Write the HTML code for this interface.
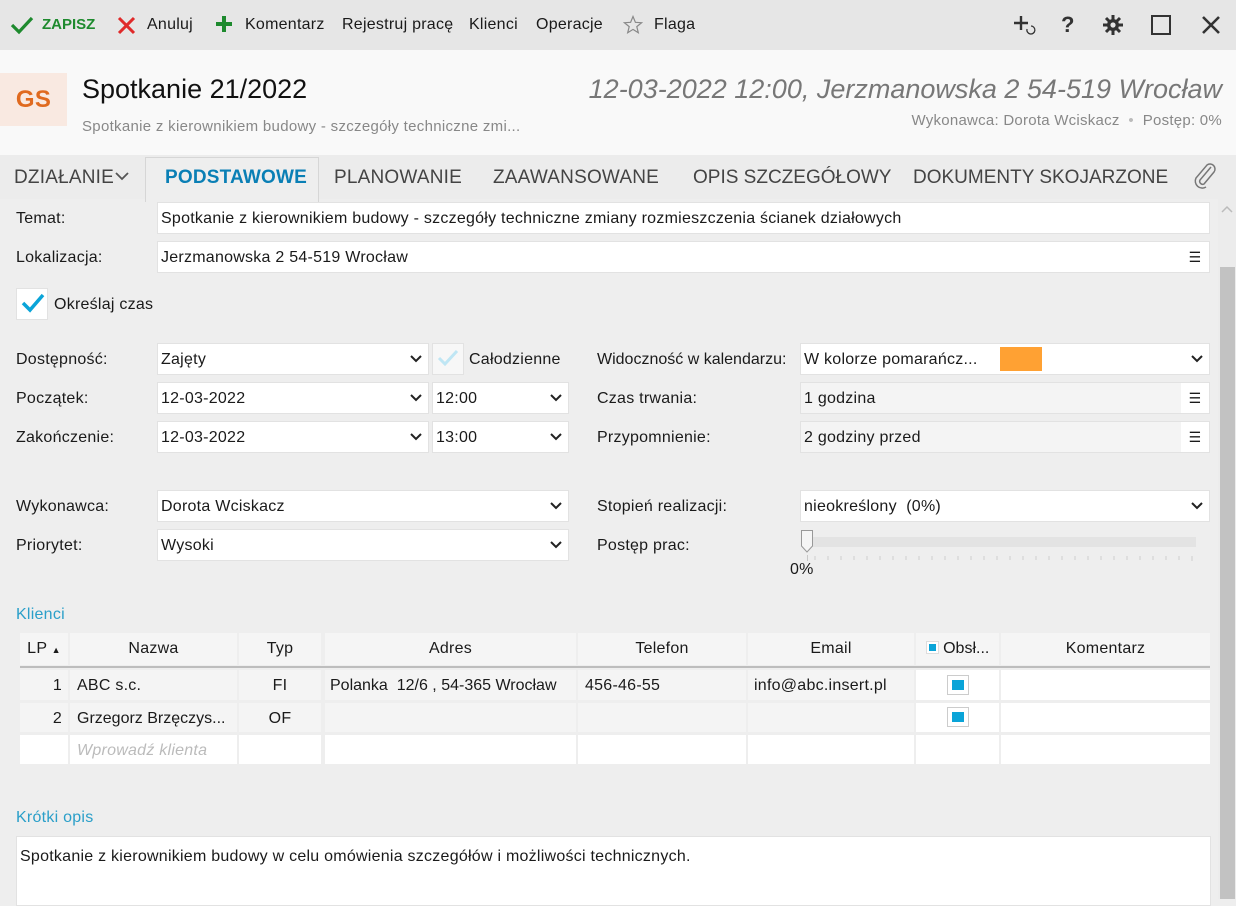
<!DOCTYPE html>
<html><head><meta charset="utf-8">
<style>
*{box-sizing:border-box;margin:0;padding:0}
body{width:1236px;height:899px;overflow:hidden;background:#eeeeee;font-family:"Liberation Sans",sans-serif;font-size:16px;letter-spacing:0.25px;color:#1a1a1a;position:relative}
.a{position:absolute;white-space:nowrap}
.f{position:absolute;background:#fff;border:1px solid #e2e2e2;height:32px;line-height:32px;padding-left:3px;white-space:nowrap;overflow:hidden}
.g{background:#f4f4f4}
.chev{position:absolute;right:6px;top:11px}
.ham{position:absolute;right:0;top:0;width:28px;height:30px;background:#fff;text-align:center;line-height:30px;font-size:14px}
.lbl{position:absolute;white-space:nowrap;line-height:20px}
.th,.td{position:absolute;height:32px;line-height:32px;text-align:center;white-space:nowrap;overflow:hidden}
.th{background:#f5f5f5;top:633px}
.tb{display:inline-block;vertical-align:middle}
.tab{position:absolute;top:167px;font-size:19px;color:#444;letter-spacing:0.2px}
</style></head><body>
<!-- toolbar -->
<div class="a" style="left:0;top:0;width:1236px;height:50px;background:#e6e6e6"></div>
<svg class="a" style="left:10px;top:15px" width="24" height="20" viewBox="0 0 24 20"><path d="M2 10 L9 17 L22 3" stroke="#1e8a2e" stroke-width="3.2" fill="none"/></svg>
<div class="a" style="left:42px;top:16px;color:#1e8a2e;font-weight:bold;font-size:15px;letter-spacing:0">ZAPISZ</div>
<svg class="a" style="left:117px;top:16px" width="19" height="19"><path d="M2 2L17 17M17 2L2 17" stroke="#e02a2a" stroke-width="3"/></svg>
<div class="a" style="left:147px;top:16px">Anuluj</div>
<svg class="a" style="left:215px;top:15px" width="18" height="18"><path d="M9 1V17M1 9H17" stroke="#1e8a2e" stroke-width="4"/></svg>
<div class="a" style="left:245px;top:16px">Komentarz</div>
<div class="a" style="left:342px;top:16px">Rejestruj pracę</div>
<div class="a" style="left:469px;top:16px">Klienci</div>
<div class="a" style="left:536px;top:16px">Operacje</div>
<svg class="a" style="left:623px;top:15px" width="20" height="20" viewBox="0 0 20 20"><path d="M10 1.5L12.4 7.3 18.6 7.7 13.8 11.6 15.3 17.7 10 14.4 4.7 17.7 6.2 11.6 1.4 7.7 7.6 7.3Z" fill="none" stroke="#888" stroke-width="1.2"/></svg>
<div class="a" style="left:654px;top:16px">Flaga</div>
<svg class="a" style="left:1013px;top:14px" width="26" height="24"><path d="M8 2V16M1 9H15" stroke="#333" stroke-width="2.4"/><path d="M14 15a4 4 0 1 0 4-3" stroke="#333" stroke-width="1.3" fill="none"/></svg>
<div class="a" style="left:1061px;top:12px;font-size:22px;font-weight:bold;color:#333">?</div>
<svg class="a" style="left:1102px;top:14px" width="22" height="22" viewBox="0 0 22 22"><g stroke="#333" stroke-width="3"><path d="M11 1V21M1 11H21M4 4L18 18M18 4L4 18"/></g><circle cx="11" cy="11" r="6" fill="#333"/><circle cx="11" cy="11" r="2.6" fill="#e6e6e6"/></svg>
<div class="a" style="left:1151px;top:15px;width:20px;height:20px;border:2.5px solid #333"></div>
<svg class="a" style="left:1201px;top:15px" width="20" height="20"><path d="M2 2L18 18M18 2L2 18" stroke="#333" stroke-width="2.6"/></svg>
<!-- header -->
<div class="a" style="left:0;top:50px;width:1236px;height:105px;background:#f9f9f9"></div>
<div class="a" style="left:0;top:73px;width:67px;height:53px;background:#f9e9e1;color:#e06a1f;font-size:24px;line-height:53px;text-align:center;font-weight:bold">GS</div>
<div class="a" style="left:82px;top:74px;font-size:27px;color:#111;letter-spacing:0">Spotkanie 21/2022</div>
<div class="a" style="left:82px;top:118px;font-size:15px;color:#888;letter-spacing:0.3px">Spotkanie z kierownikiem budowy - szczegóły techniczne zmi...</div>
<div class="a" style="right:14px;top:74px;font-size:27px;color:#777;font-style:italic;letter-spacing:0">12-03-2022 12:00, Jerzmanowska 2 54-519 Wrocław</div>
<div class="a" style="right:14px;top:112px;font-size:15px;color:#888">Wykonawca: Dorota Wciskacz &nbsp;<span style="color:#bbb">•</span>&nbsp; Postęp: 0%</div>
<!-- tabs -->
<div class="a" style="left:0;top:155px;width:1236px;height:44px;background:#ececec"></div>
<div class="a" style="left:145px;top:157px;width:174px;height:45px;background:#eeeeee;border:1px solid #d6d6d6;border-bottom:none"></div>
<div class="tab" style="left:14px">DZIAŁANIE</div>
<svg class="a" style="left:115px;top:171px" width="14" height="10"><path d="M1 2L7 8 13 2" stroke="#555" stroke-width="1.8" fill="none"/></svg>
<div class="tab" style="left:165px;color:#0a7fb5;font-weight:bold">PODSTAWOWE</div>
<div class="tab" style="left:334px">PLANOWANIE</div>
<div class="tab" style="left:493px">ZAAWANSOWANE</div>
<div class="tab" style="left:693px;letter-spacing:0">OPIS SZCZEGÓŁOWY</div>
<div class="tab" style="left:913px;letter-spacing:0">DOKUMENTY SKOJARZONE</div>
<svg class="a" style="left:1193px;top:162px" width="26" height="28" viewBox="0 0 26 28"><path d="M20 6L9 19a3 3 0 0 0 4 4L23 11a5 5 0 0 0-7-7L5 17a7 7 0 0 0 10 9" stroke="#777" stroke-width="1.5" fill="none" transform="translate(-2,-1)"/></svg>
<!-- scrollbar -->
<div class="a" style="left:1218px;top:199px;width:18px;height:700px;background:#ececec"></div>
<svg class="a" style="left:1221px;top:205px" width="12" height="10"><path d="M1 7L6 2 11 7" stroke="#bbb" stroke-width="1.5" fill="none"/></svg>
<div class="a" style="left:1220px;top:267px;width:15px;height:632px;background:#c2c2c2"></div>
<!-- form -->
<div class="lbl" style="left:16px;top:209px">Temat:</div>
<div class="f" style="left:157px;top:202px;width:1053px">Spotkanie z kierownikiem budowy - szczegóły techniczne zmiany rozmieszczenia ścianek działowych</div>
<div class="lbl" style="left:16px;top:248px">Lokalizacja:</div>
<div class="f" style="left:157px;top:241px;width:1053px">Jerzmanowska 2 54-519 Wrocław<div class="ham">☰</div></div>
<div class="a" style="left:16px;top:288px;width:32px;height:32px;background:#fff;border:1px solid #e2e2e2"></div>
<svg class="a" style="left:21px;top:292px" width="24" height="22"><path d="M2 11L9 18 22 3" stroke="#0aa4d8" stroke-width="3.5" fill="none"/></svg>
<div class="lbl" style="left:54px;top:295px">Określaj czas</div>

<div class="lbl" style="left:16px;top:350px">Dostępność:</div>
<div class="f" style="left:157px;top:343px;width:272px">Zajęty<svg class="chev" width="12" height="8"><path d="M1 1L6 6 11 1" stroke="#222" stroke-width="2" fill="none"/></svg></div>
<div class="a" style="left:432px;top:343px;width:32px;height:32px;background:#f7f7f7;border:1px solid #e2e2e2"></div>
<svg class="a" style="left:437px;top:348px" width="22" height="20"><path d="M2 10L8 16 20 3" stroke="#bfe6f4" stroke-width="3" fill="none"/></svg>
<div class="lbl" style="left:469px;top:350px">Całodzienne</div>
<div class="lbl" style="left:16px;top:389px">Początek:</div>
<div class="f" style="left:157px;top:382px;width:272px">12-03-2022<svg class="chev" width="12" height="8"><path d="M1 1L6 6 11 1" stroke="#222" stroke-width="2" fill="none"/></svg></div>
<div class="f" style="left:432px;top:382px;width:137px">12:00<svg class="chev" width="12" height="8"><path d="M1 1L6 6 11 1" stroke="#222" stroke-width="2" fill="none"/></svg></div>
<div class="lbl" style="left:16px;top:428px">Zakończenie:</div>
<div class="f" style="left:157px;top:421px;width:272px">12-03-2022<svg class="chev" width="12" height="8"><path d="M1 1L6 6 11 1" stroke="#222" stroke-width="2" fill="none"/></svg></div>
<div class="f" style="left:432px;top:421px;width:137px">13:00<svg class="chev" width="12" height="8"><path d="M1 1L6 6 11 1" stroke="#222" stroke-width="2" fill="none"/></svg></div>

<div class="lbl" style="left:597px;top:350px;letter-spacing:0">Widoczność w kalendarzu:</div>
<div class="f" style="left:800px;top:343px;width:410px">W kolorze pomarańcz...<div class="a" style="left:199px;top:3px;width:42px;height:24px;background:#ffa133"></div><svg class="chev" width="12" height="8"><path d="M1 1L6 6 11 1" stroke="#222" stroke-width="2" fill="none"/></svg></div>
<div class="lbl" style="left:597px;top:389px">Czas trwania:</div>
<div class="f g" style="left:800px;top:382px;width:410px">1 godzina<div class="ham">☰</div></div>
<div class="lbl" style="left:597px;top:428px">Przypomnienie:</div>
<div class="f g" style="left:800px;top:421px;width:410px">2 godziny przed<div class="ham">☰</div></div>

<div class="lbl" style="left:16px;top:497px">Wykonawca:</div>
<div class="f" style="left:157px;top:490px;width:412px">Dorota Wciskacz<svg class="chev" width="12" height="8"><path d="M1 1L6 6 11 1" stroke="#222" stroke-width="2" fill="none"/></svg></div>
<div class="lbl" style="left:16px;top:536px">Priorytet:</div>
<div class="f" style="left:157px;top:529px;width:412px">Wysoki<svg class="chev" width="12" height="8"><path d="M1 1L6 6 11 1" stroke="#222" stroke-width="2" fill="none"/></svg></div>
<div class="lbl" style="left:597px;top:497px">Stopień realizacji:</div>
<div class="f" style="left:800px;top:490px;width:410px">nieokreślony&nbsp; (0%)<svg class="chev" width="12" height="8"><path d="M1 1L6 6 11 1" stroke="#222" stroke-width="2" fill="none"/></svg></div>
<div class="lbl" style="left:597px;top:536px">Postęp prac:</div>
<div class="a" style="left:804px;top:537px;width:392px;height:10px;background:#e3e3e3"></div>
<svg class="a" style="left:798px;top:529px" width="400" height="34"><path d="M3.5 1.5H14.5V17L9 23 3.5 17Z" fill="#f5f5f5" stroke="#999"/><g stroke="#c8c8c8"><path d="M9.5 26V32"/></g><path d="M17 27V31M30 27V31M43 27V31M56 27V31M69 27V31M82 27V31M95 27V31M108 27V31M121 27V31M134 27V31M147 27V31M160 27V31M173 27V31M186 27V31M199 27V31M212 27V31M225 27V31M238 27V31M251 27V31M264 27V31M277 27V31M290 27V31M303 27V31M316 27V31M329 27V31M342 27V31M355 27V31M368 27V31M381 27V31M394 27V32" stroke="#cfcfcf"/></svg>
<div class="lbl" style="left:790px;top:560px">0%</div>

<!-- Klienci -->
<div class="lbl" style="left:16px;top:605px;color:#2a9fc9;font-size:16px">Klienci</div>
<div class="th" style="left:20px;width:48px">LP <span style="font-size:9px">▲</span></div>
<div class="th" style="left:70px;width:167px">Nazwa</div>
<div class="th" style="left:239px;width:82px">Typ</div>
<div class="th" style="left:325px;width:251px">Adres</div>
<div class="th" style="left:578px;width:168px">Telefon</div>
<div class="th" style="left:748px;width:166px">Email</div>
<div class="th" style="left:916px;width:83px;letter-spacing:0"><span class="tb" style="width:13px;height:13px;border:1px solid #ddd;background:#fff;position:relative;top:-1px"><span style="position:absolute;left:2px;top:2px;width:7px;height:7px;background:#0aa4d8"></span></span> Obsł...</div>
<div class="th" style="left:1001px;width:209px">Komentarz</div>
<div class="a" style="left:20px;top:666px;width:1190px;height:2px;background:#bdbdbd"></div>
<!-- row1 -->
<div class="td g" style="left:20px;top:670px;width:48px;height:30px;line-height:32px;text-align:right;padding-right:6px">1</div>
<div class="td g" style="left:70px;top:670px;width:167px;height:30px;line-height:32px;text-align:left;padding-left:7px">ABC s.c.</div>
<div class="td g" style="left:239px;top:670px;width:82px;height:30px;line-height:32px">FI</div>
<div class="td g" style="left:325px;top:670px;width:251px;height:30px;line-height:32px;text-align:left;padding-left:5px;letter-spacing:0">Polanka&nbsp; 12/6 , 54-365 Wrocław</div>
<div class="td g" style="left:578px;top:670px;width:168px;height:30px;line-height:32px;text-align:left;padding-left:7px">456-46-55</div>
<div class="td g" style="left:748px;top:670px;width:166px;height:30px;line-height:32px;text-align:left;padding-left:6px">info@abc.insert.pl</div>
<div class="td" style="left:916px;top:670px;width:83px;height:30px;background:#fff"></div>
<div class="a" style="left:947px;top:675px;width:22px;height:20px;border:1px solid #ccc;background:#fff"><div class="a" style="left:4px;top:4px;width:12px;height:10px;background:#0aa4d8"></div></div>
<div class="td" style="left:1001px;top:670px;width:209px;height:30px;background:#fff"></div>
<!-- row2 -->
<div class="td g" style="left:20px;top:703px;width:48px;height:29px;line-height:31px;text-align:right;padding-right:6px">2</div>
<div class="td g" style="left:70px;top:703px;width:167px;height:29px;line-height:31px;text-align:left;padding-left:7px;letter-spacing:0">Grzegorz Brzęczys...</div>
<div class="td g" style="left:239px;top:703px;width:82px;height:29px;line-height:31px">OF</div>
<div class="td g" style="left:325px;top:703px;width:251px;height:29px"></div>
<div class="td g" style="left:578px;top:703px;width:168px;height:29px"></div>
<div class="td g" style="left:748px;top:703px;width:166px;height:29px"></div>
<div class="td" style="left:916px;top:703px;width:83px;height:29px;background:#fff"></div>
<div class="a" style="left:947px;top:707px;width:22px;height:20px;border:1px solid #ccc;background:#fff"><div class="a" style="left:4px;top:4px;width:12px;height:10px;background:#0aa4d8"></div></div>
<div class="td" style="left:1001px;top:703px;width:209px;height:29px;background:#fff"></div>
<!-- row3 -->
<div class="td" style="left:20px;top:735px;width:48px;height:29px;background:#fff"></div>
<div class="td" style="left:70px;top:735px;width:167px;height:29px;line-height:31px;background:#fff;text-align:left;padding-left:7px;color:#bbb;font-style:italic">Wprowadź klienta</div>
<div class="td" style="left:239px;top:735px;width:82px;height:29px;background:#fff"></div>
<div class="td" style="left:325px;top:735px;width:251px;height:29px;background:#fff"></div>
<div class="td" style="left:578px;top:735px;width:168px;height:29px;background:#fff"></div>
<div class="td" style="left:748px;top:735px;width:166px;height:29px;background:#fff"></div>
<div class="td" style="left:916px;top:735px;width:83px;height:29px;background:#fff"></div>
<div class="td" style="left:1001px;top:735px;width:209px;height:29px;background:#fff"></div>

<!-- Krótki opis -->
<div class="lbl" style="left:16px;top:808px;color:#2a9fc9;font-size:16px">Krótki opis</div>
<div class="a" style="left:16px;top:836px;width:1195px;height:70px;background:#fff;border:1px solid #e2e2e2"></div>
<div class="lbl" style="left:20px;top:847px">Spotkanie z kierownikiem budowy w celu omówienia szczegółów i możliwości technicznych.</div>
</body></html>
